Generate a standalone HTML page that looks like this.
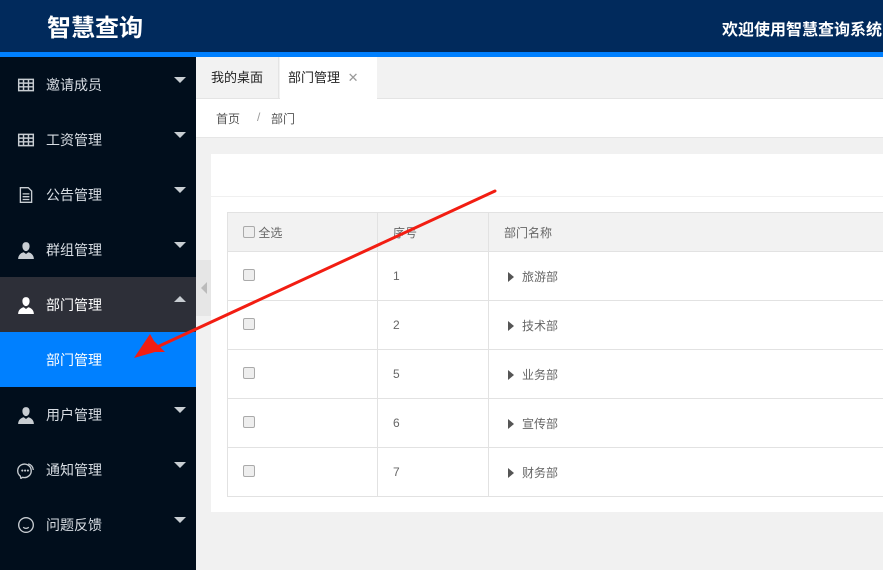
<!DOCTYPE html>
<html><head><meta charset="utf-8"><style>
*{margin:0;padding:0;box-sizing:border-box}
body{width:883px;height:570px;overflow:hidden;background:#f1f1f1;font-family:"Liberation Sans","Noto Sans CJK SC",sans-serif;font-size:13px;position:relative}
.hd{position:absolute;left:0;top:0;width:883px;height:52px;background:#012a5c}
.hd .logo{position:absolute;left:47px;top:8px;color:#fff;font-size:24px;font-weight:bold}
.hd .wel{position:absolute;left:722px;top:16px;color:#fff;font-size:16px;font-weight:bold;white-space:nowrap}
.bl{position:absolute;left:0;top:52px;width:883px;height:5px;background:#0080ff}
.sb{position:absolute;left:0;top:57px;width:196px;height:513px;background:#010e1c}
.it{position:absolute;left:0;width:196px;height:55px;color:#d8dde3;font-size:14px}
.it .t{position:absolute;left:46px;top:18px}
.it .ic{position:absolute;left:17px;top:19px;width:18px;height:18px}
.car{position:absolute;left:174px;top:20px;width:0;height:0;border-left:6px solid transparent;border-right:6px solid transparent;border-top:6px solid #c8cdd2}
.up{border-top:none;border-bottom:6px solid #c8cdd2;top:19px}
.tabs{position:absolute;left:196px;top:57px;width:687px;height:42px;background:#f2f2f2;border-bottom:1px solid #e4e4e4}
.tab{position:absolute;top:0;height:42px;line-height:42px;font-size:13px;color:#222}
.bc{position:absolute;left:196px;top:99px;width:687px;height:39px;background:#fff;border-bottom:1px solid #e6e6e6;font-size:12px;color:#555}
.card{position:absolute;left:211px;top:154px;width:672px;height:358px;background:#fff}
table{position:absolute;left:16px;top:58px;border-collapse:collapse;width:680px}
td{border:1px solid #e2e2e2;height:49px;font-size:12px;color:#666;padding-left:15px;vertical-align:middle}
tr.h td{background:#f2f2f2;height:39px}
.cb{display:inline-block;width:12px;height:12px;border:1px solid #aaa;border-radius:2px;background:#eee;vertical-align:-1px}
.tri{display:inline-block;width:0;height:0;border-top:5px solid transparent;border-bottom:5px solid transparent;border-left:6px solid #555;margin-left:4px;margin-right:8px;vertical-align:-1px}
</style></head><body>
<div class="hd"><div class="logo">智慧查询</div><div class="wel">欢迎使用智慧查询系统</div></div>
<div class="bl"></div>
<div class="sb">
<div class="it" style="top:0"><svg class="ic" viewBox="0 0 16 16"><path d="M1.5 3h13v10h-13zM1.5 6.3h13M1.5 9.6h13M5.8 3v10M10.2 3v10" stroke="#c8cdd2" fill="none" stroke-width="1.3"/></svg><span class="t">邀请成员</span><i class="car"></i></div>
<div class="it" style="top:55px"><svg class="ic" viewBox="0 0 16 16"><path d="M1.5 3h13v10h-13zM1.5 6.3h13M1.5 9.6h13M5.8 3v10M10.2 3v10" stroke="#c8cdd2" fill="none" stroke-width="1.3"/></svg><span class="t">工资管理</span><i class="car"></i></div>
<div class="it" style="top:110px"><svg class="ic" viewBox="0 0 16 16"><path d="M3 1.5h7l3 3v10H3zM5 7h6M5 9.5h6M5 12h6" stroke="#c8cdd2" fill="none" stroke-width="1.2"/></svg><span class="t">公告管理</span><i class="car"></i></div>
<div class="it" style="top:165px"><svg class="ic" viewBox="0 0 16 16"><path d="M8 1c2 0 3.2 1.4 3.2 3.6S10 9 8 9 4.8 6.8 4.8 4.6 6 1 8 1zM1 16c0-3.5 2.5-5.5 5-6l2 1.5 2-1.5c2.5.5 5 2.5 5 6z" fill="#c8cdd2"/></svg><span class="t">群组管理</span><i class="car"></i></div>
<div class="it" style="top:220px;background:#2d2f38;color:#fff"><svg class="ic" viewBox="0 0 16 16"><path d="M8 1c2 0 3.2 1.4 3.2 3.6S10 9 8 9 4.8 6.8 4.8 4.6 6 1 8 1zM1 16c0-3.5 2.5-5.5 5-6l2 1.5 2-1.5c2.5.5 5 2.5 5 6z" fill="#fff"/></svg><span class="t">部门管理</span><i class="car up"></i></div>
<div class="it" style="top:275px;background:#0080ff;color:#fff"><span class="t">部门管理</span></div>
<div class="it" style="top:330px"><svg class="ic" viewBox="0 0 16 16"><path d="M8 1c2 0 3.2 1.4 3.2 3.6S10 9 8 9 4.8 6.8 4.8 4.6 6 1 8 1zM1 16c0-3.5 2.5-5.5 5-6l2 1.5 2-1.5c2.5.5 5 2.5 5 6z" fill="#c8cdd2"/></svg><span class="t">用户管理</span><i class="car"></i></div>
<div class="it" style="top:385px"><svg class="ic" viewBox="0 0 16 16"><path d="M3 13.5A6 6 0 1 1 5 14.5L3.5 15.5Z" stroke="#c8cdd2" fill="none" stroke-width="1.2"/><path d="M10 2.5A6 6 0 0 1 14.5 8" stroke="#c8cdd2" fill="none" stroke-width="1.1"/><circle cx="4.7" cy="8.5" r=".9" fill="#c8cdd2"/><circle cx="7.2" cy="8.5" r=".9" fill="#c8cdd2"/><circle cx="9.7" cy="8.5" r=".9" fill="#c8cdd2"/></svg><span class="t">通知管理</span><i class="car"></i></div>
<div class="it" style="top:440px"><svg class="ic" viewBox="0 0 16 16"><circle cx="8" cy="8" r="6.5" stroke="#c8cdd2" fill="none" stroke-width="1.2"/><path d="M5.5 10q2.5 2 5 0" stroke="#c8cdd2" fill="none"/></svg><span class="t">问题反馈</span><i class="car"></i></div>
</div>
<div class="tabs">
<div class="tab" style="left:0;width:83px;text-align:center;border-right:1px solid #e4e4e4">我的桌面</div>
<div class="tab" style="left:84px;width:97px;background:#fff;padding-left:8px;height:43px">部门管理 <span style="color:#999;margin-left:4px">✕</span></div>
</div>
<div class="bc"><span style="position:absolute;left:20px;top:11px">首页</span><span style="position:absolute;left:61px;top:11px;color:#999">/</span><span style="position:absolute;left:75px;top:11px">部门</span></div>
<div style="position:absolute;left:196px;top:260px;width:15px;height:56px;background:#e6e6e6"></div>
<div style="position:absolute;left:201px;top:282px;width:0;height:0;border-top:6px solid transparent;border-bottom:6px solid transparent;border-right:6px solid #bbb"></div>
<div class="card">
<div style="position:absolute;left:0;top:42px;width:672px;border-top:1px solid #f0f0f0"></div>
<table>
<tr class="h"><td style="width:150px"><span class="cb"></span> 全选</td><td style="width:111px">序号</td><td>部门名称</td></tr>
<tr><td><span class="cb"></span></td><td>1</td><td><i class="tri"></i>旅游部</td></tr>
<tr><td><span class="cb"></span></td><td>2</td><td><i class="tri"></i>技术部</td></tr>
<tr><td><span class="cb"></span></td><td>5</td><td><i class="tri"></i>业务部</td></tr>
<tr><td><span class="cb"></span></td><td>6</td><td><i class="tri"></i>宣传部</td></tr>
<tr><td><span class="cb"></span></td><td>7</td><td><i class="tri"></i>财务部</td></tr>
</table>
</div>
<svg style="position:absolute;left:0;top:0" width="883" height="570"><path d="M495 191L155 348" stroke="#f21d12" stroke-width="3" stroke-linecap="round" fill="none"/><path d="M134 358L150 334L154 341L165 352L155 352Z" fill="#f21d12"/></svg>
</body></html>
